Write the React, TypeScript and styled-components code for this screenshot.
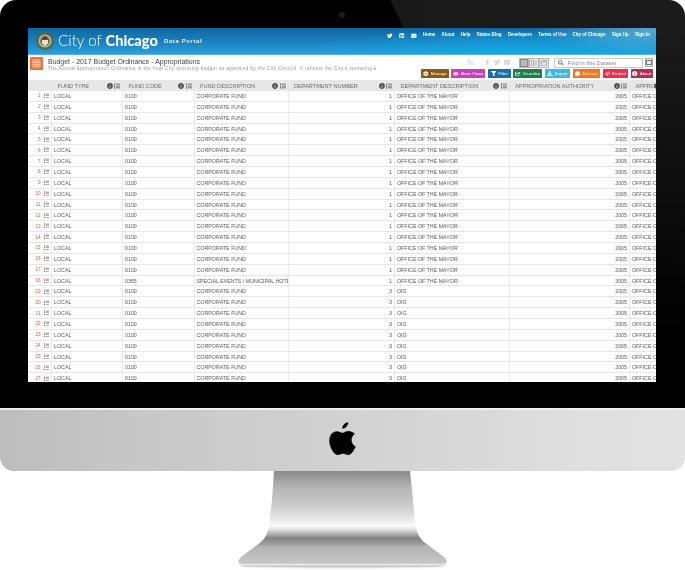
import React from "react";
import styled, { createGlobalStyle } from "styled-components";
import {
  FaTwitter, FaLinkedin, FaEnvelope, FaRss, FaFacebookF, FaCog, FaFilter, FaChartLine, FaComment,
  FaInfoCircle, FaSearch, FaEye, FaDownload, FaCode, FaList,
} from "react-icons/fa";

const Global = createGlobalStyle`
  html, body { margin: 0; padding: 0; background: #fff; }
  body { font-family: "Liberation Sans", Arial, sans-serif; }
`;

const Page = styled.div`
  width: 685px; height: 570px; overflow: hidden; display: flex; flex-direction: column; background: #fff;
`;
const Bezel = styled.div`
  position: relative; flex: none; height: 408px; box-sizing: border-box; padding: 28px 29px 26px 28px;
  border-radius: 16px 16px 0 0;
  background:
    linear-gradient(180deg, rgba(0,0,0,0) 30px, rgba(0,0,0,.55) 200px, #000 340px),
    linear-gradient(65deg, #000 0, #000 66.3%, #191919 66.4%, #1b1b1b 100%);
`;
const Camera = styled.div`
  position: absolute; left: 339px; top: 12px; width: 6px; height: 6px; border-radius: 50%; background: #1c1c20;
`;
const Screen = styled.div`
  width: 628px; height: 354px; background: #fff; overflow: hidden; display: flex; flex-direction: column;
  filter: blur(0.3px);
`;
const Banner = styled.header`
  flex: none; height: 27px; box-sizing: border-box; display: flex; align-items: center; padding: 0 6px 0 8px;
  border-bottom: 1px solid #4fb6e4;
  background:
    radial-gradient(ellipse 120px 22px at 100% 12%, rgba(120,205,235,.65), rgba(120,205,235,0) 100%),
    radial-gradient(ellipse 220px 26px at 78% 100%, rgba(15,170,228,.9), rgba(15,170,228,0) 100%),
    linear-gradient(180deg, #10669e 0, #1b82c0 55%, #2a9fd9 100%);
`;
const Seal = styled.svg`width: 18px; height: 18px; flex: none; margin-top: -1px;`;
const Brand = styled.div`
  margin-left: 4px; color: #fff; font: 300 15.2px/1 Lato, sans-serif; white-space: nowrap; width: 106px; flex: none;
`;
const BrandStrong = styled.b`font: 900 14.6px/1 Lato, sans-serif; letter-spacing: 0;`;
const Portal = styled.div`
  color: #e3f3fb; font: 700 6px/1 "Liberation Sans", sans-serif; letter-spacing: .6px; white-space: nowrap;
`;
const Nav = styled.nav`
  margin-left: auto; display: flex; align-items: center; color: #fff; font: 700 4.5px/1 "Liberation Sans", sans-serif;
  white-space: nowrap; padding-bottom: 11px;
`;
const NavIcons = styled.div`display: flex; align-items: center; gap: 6.5px; font-size: 5.5px; margin-right: 6px;`;
const NavLinks = styled.div`display: flex; gap: 6.2px;`;

const InfoBar = styled.div`
  flex: none; height: 25px; display: flex; padding: 2px 3px 0 2px; box-sizing: border-box;
`;
const DatasetIcon = styled.svg`width: 13px; height: 13px; flex: none;`;
const TitleBlock = styled.div`margin-left: 5px; padding-top: .5px; width: 340px; flex: none;`;
const Title = styled.div`color: #444; font-size: 6.95px; line-height: 7.5px; white-space: nowrap;`;
const Desc = styled.div`color: #949494; font-size: 4.6px; line-height: 6px; margin-top: .7px; white-space: nowrap; letter-spacing: .41px;`;
const Actions = styled.div`margin-left: auto; display: flex; flex-direction: column; gap: 1px; align-items: flex-end; flex: none;`;
const ToolRow = styled.div`display: flex; align-items: center; height: 11px;`;
const Social = styled.div`display: flex; align-items: center; gap: 3.5px; color: #d6d6d6; font-size: 6.5px; margin-right: 9px;`;
const RssWrap = styled.span`display: flex; margin-right: 7px;`;
const Segs = styled.div`display: flex; margin-right: 5px;`;
const Seg = styled.div<{ $on?: boolean }>`
  width: 10px; height: 10px; box-sizing: border-box; border: 1px solid #b5b5b5; display: flex; align-items: center; justify-content: center;
  background: ${p => (p.$on ? "#8a8a8a" : "#efefef")}; color: ${p => (p.$on ? "#e8e8e8" : "#999")};
`;
const SegGlyph = styled.svg`width: 6px; height: 6px;`;
const Search = styled.div`
  width: 89px; height: 10px; box-sizing: border-box; border: 1px solid #c9c9c9; display: flex; align-items: center; gap: 4px;
  padding-left: 3px; color: #8a8a8a; font-size: 5.7px; white-space: nowrap;
  svg { color: #666; font-size: 5.5px; flex: none; }
`;
const SmallBtn = styled.div`
  width: 8px; height: 9px; margin-left: 2px; box-sizing: border-box; border: 1px solid #a9a9a9; background: #eee;
  display: flex; align-items: center; justify-content: center;
`;
const SmallGlyph = styled.div`width: 4px; height: 3px; border: 1px solid #777;`;
const Buttons = styled.div`display: flex; gap: 2.7px;`;
const Btn = styled.div<{ $bg: string; $w: number }>`
  width: ${p => p.$w}px; height: 9px; background: ${p => p.$bg}; color: #fff; font-size: 4.4px; border-radius: .5px;
  display: flex; align-items: center; justify-content: center; gap: 2px; white-space: nowrap;
  svg { font-size: 5.5px; flex: none; }
`;

const COLS = "24px 71px 71.5px 94px 106.5px 114.5px 120.5px 40px";
const Table = styled.div`flex: 1; min-height: 0; overflow: hidden;`;
const HeadRow = styled.div`
  display: grid; grid-template-columns: ${COLS}; height: 11px; background: #e7e7e7; width: 642px;
`;
const HeadCell = styled.div`
  display: flex; align-items: center; padding: 0 3px 0 5.5px; color: #6c6c6c; font-size: 5.6px; white-space: nowrap; min-width: 0;
  overflow: hidden;
`;
const HeadLabel = styled.span`flex: 1; min-width: 0;`;
const HeadIcons = styled.span`display: flex; align-items: center; gap: 1.5px; color: #4f4f4f; flex: none; font-size: 6px;`;
const Row = styled.div`
  display: grid; grid-template-columns: ${COLS}; height: 10.86px; box-sizing: border-box; width: 642px;
  border-bottom: 1px solid #e6e6e6; background: #fff;
`;
const IndexCell = styled.div`
  display: flex; align-items: center; justify-content: flex-end; gap: 3px; padding-right: 2px;
  font-size: 4.6px; color: #e0623a; border-right: 1px solid #ececec;
  svg { color: #666; font-size: 5.5px; }
`;
const Cell = styled.div<{ $right?: boolean }>`
  display: flex; align-items: center; justify-content: ${p => (p.$right ? "flex-end" : "flex-start")};
  padding: 0 ${p => (p.$right ? "2px" : "0")} 0 ${p => (p.$right ? "0" : "2px")}; color: #5a5a5a; font-size: 5.3px;
  border-right: 1px solid #ececec; white-space: nowrap; overflow: hidden; min-width: 0;
`;

const Chin = styled.div`
  flex: none; height: 63px; display: flex; align-items: center; justify-content: center;
  border-radius: 0 0 14px 14px; border-top: 2px solid #efefef; box-sizing: border-box;
  background: linear-gradient(90deg, #bdbdbd 0, #c9c9c9 25%, #d3d3d3 55%, #dfdfdf 85%, #e2e2e2 100%);
`;
const AppleLogo = styled.svg`width: 27px; height: 35px; margin-top: -2px;`;
const Stand = styled.svg`width: 685px; height: 99px; flex: none; display: block;`;

const headers = ["FUND TYPE", "FUND CODE", "FUND DESCRIPTION", "DEPARTMENT NUMBER", "DEPARTMENT DESCRIPTION", "APPROPRIATION AUTHORITY", "APPROPRIATION AUTHORITY DESCRIPTION"];

const rows = Array.from({ length: 27 }, (_, i) => {
  const n = i + 1;
  const oig = n > 18;
  return {
    n,
    code: n === 18 ? "0355" : "0100",
    desc: n === 18 ? "SPECIAL EVENTS / MUNICIPAL HOTEL OPERATORS" : "CORPORATE FUND",
    dept: oig ? "3" : "1",
    dd: oig ? "OIG" : "OFFICE OF THE MAYOR",
  };
});

const nav = ["Home", "About", "Help", "Status Blog", "Developers", "Terms of Use", "City of Chicago", "Sign Up", "Sign In"];

export default function App() {
  return (
    <Page>
      <Global />
      <Bezel>
        <Camera />
        <Screen>
          <Banner>
            <Seal viewBox="0 0 18 18">
              <circle cx="9" cy="9" r="9" fill="#4f6a3c" />
              <circle cx="9" cy="9" r="6.6" fill="#b9b27e" />
              <circle cx="9" cy="9" r="4.6" fill="#35678c" />
              <path d="M6 8h6v3.500l-3 2.500-3-2.500z" fill="#e8e2c8" />
              <path d="M7 4.500h4v3H7z" fill="#7a2f2a" />
            </Seal>
            <Brand>City of <BrandStrong>Chicago</BrandStrong></Brand>
            <Portal>Data Portal</Portal>
            <Nav>
              <NavIcons><FaTwitter /><FaLinkedin /><FaEnvelope /></NavIcons>
              <NavLinks>{nav.map(n => <span key={n}>{n}</span>)}</NavLinks>
            </Nav>
          </Banner>
          <InfoBar>
            <DatasetIcon viewBox="0 0 13 13">
              <rect width="13" height="13" fill="#e8743b" />
              <path d="M3 3h7v7H3zM3 5.300h7M3 7.700h7M5.300 3v7M7.700 3v7" fill="none" stroke="#f8d8c4" strokeWidth=".8" />
            </DatasetIcon>
            <TitleBlock>
              <Title>Budget - 2017 Budget Ordinance - Appropriations</Title>
              <Desc>The Annual Appropriation Ordinance is the final City operating budget as approved by the City Council. It reflects the City's operating ▸</Desc>
            </TitleBlock>
            <Actions>
              <ToolRow>
                <Social><RssWrap><FaRss /></RssWrap><FaFacebookF /><FaTwitter /><FaEnvelope /></Social>
                <Segs>
                  <Seg $on><SegGlyph viewBox="0 0 6 6"><path d="M0 1h6M0 3h6M0 5h6" stroke="currentColor" /></SegGlyph></Seg>
                  <Seg><SegGlyph viewBox="0 0 6 6"><path d="M.5.500h2v5h-2zM3.500 1h2.500M3.500 3h2.500M3.500 5h2.500" stroke="currentColor" fill="none" strokeWidth=".8" /></SegGlyph></Seg>
                  <Seg><SegGlyph viewBox="0 0 6 6"><path d="M.5.500h5v5h-5zM.5 2h5" stroke="currentColor" fill="none" strokeWidth=".8" /></SegGlyph></Seg>
                </Segs>
                <Search><FaSearch />Find in this Dataset</Search>
                <SmallBtn><SmallGlyph /></SmallBtn>
              </ToolRow>
              <Buttons>
                <Btn $bg="#8c5a14" $w={27.5}><FaCog />Manage</Btn>
                <Btn $bg="#c93fb5" $w={34}><FaEye />More Views</Btn>
                <Btn $bg="#1b6ea8" $w={22.5}><FaFilter />Filter</Btn>
                <Btn $bg="#1b7f48" $w={29}><FaChartLine />Visualize</Btn>
                <Btn $bg="#3fb6e6" $w={25}><FaDownload />Export</Btn>
                <Btn $bg="#f5761c" $w={27.5}><FaComment />Discuss</Btn>
                <Btn $bg="#ee3050" $w={25}><FaCode />Embed</Btn>
                <Btn $bg="#b12e4c" $w={22.5}><FaInfoCircle />About</Btn>
              </Buttons>
            </Actions>
          </InfoBar>
          <Table>
            <HeadRow>
              <HeadCell />
              {headers.map(h => (
                <HeadCell key={h}>
                  <HeadLabel>{h}</HeadLabel>
                  <HeadIcons><FaInfoCircle /><FaList /></HeadIcons>
                </HeadCell>
              ))}
            </HeadRow>
            {rows.map(r => (
              <Row key={r.n}>
                <IndexCell>{r.n}<FaList /></IndexCell>
                <Cell>LOCAL</Cell>
                <Cell>{r.code}</Cell>
                <Cell>{r.desc}</Cell>
                <Cell $right>{r.dept}</Cell>
                <Cell>{r.dd}</Cell>
                <Cell $right>2005</Cell>
                <Cell>OFFICE OF THE MAYOR</Cell>
              </Row>
            ))}
          </Table>
        </Screen>
      </Bezel>
      <Chin>
        <AppleLogo viewBox="0 0 27 35">
          <path d="M19.600 0c.2 3.700-3.300 7.200-6.600 7 -.4-3.500 3-7 6.600-7zM26.300 12c-5 3-4.300 10.300 .7 12.300-1.300 3.500-4.300 9-7.600 9-2 .1-3-1.300-5.300-1.300s-3.500 1.300-5.300 1.300C4.800 33.300 0 25.500 0 18.800 0 12.500 4 9 8 9c2.200 0 4 1.500 5.500 1.500C15 10.500 16.700 8.800 19.500 8.800c2.600.1 5.200 1.200 6.800 3.200z" fill="#000" stroke="#f2f2f2" strokeWidth=".5" />
        </AppleLogo>
      </Chin>
      <Stand viewBox="0 0 685 99">
        <defs>
          <linearGradient id="neck" gradientUnits="userSpaceOnUse" x1="0" y1="0" x2="0" y2="96">
            <stop offset="0" stopColor="#8a8a8a" />
            <stop offset=".18" stopColor="#b6b6b6" />
            <stop offset=".32" stopColor="#c6c6c6" />
            <stop offset=".45" stopColor="#dcdcdc" />
            <stop offset=".57" stopColor="#fbfbfb" />
            <stop offset=".61" stopColor="#e0e0e0" />
            <stop offset=".7" stopColor="#828282" />
            <stop offset=".75" stopColor="#999" />
            <stop offset=".79" stopColor="#b2b2b2" />
            <stop offset=".9" stopColor="#c0c0c0" />
            <stop offset=".96" stopColor="#c6c6c6" />
            <stop offset=".975" stopColor="#ececec" />
            <stop offset="1" stopColor="#b0b0b0" />
          </linearGradient>
          <filter id="soft" x="-5%" y="-50%" width="110%" height="200%">
            <feGaussianBlur stdDeviation="1" />
          </filter>
        </defs>
        <ellipse cx="342.500" cy="95" rx="100" ry="1.500" fill="#777" opacity=".45" filter="url(#soft)" />
        <path d="M274 0H410L413 29L414.500 46C415.500 58 418 66 424 71L444 86Q448 89.500 446 92Q445 95.500 440 95.500H245Q240 95.500 239 92Q237 89.500 241 86L261 71C267 66 269 58 270 46L272 29Z" fill="url(#neck)" />
      </Stand>
    </Page>
  );
}
